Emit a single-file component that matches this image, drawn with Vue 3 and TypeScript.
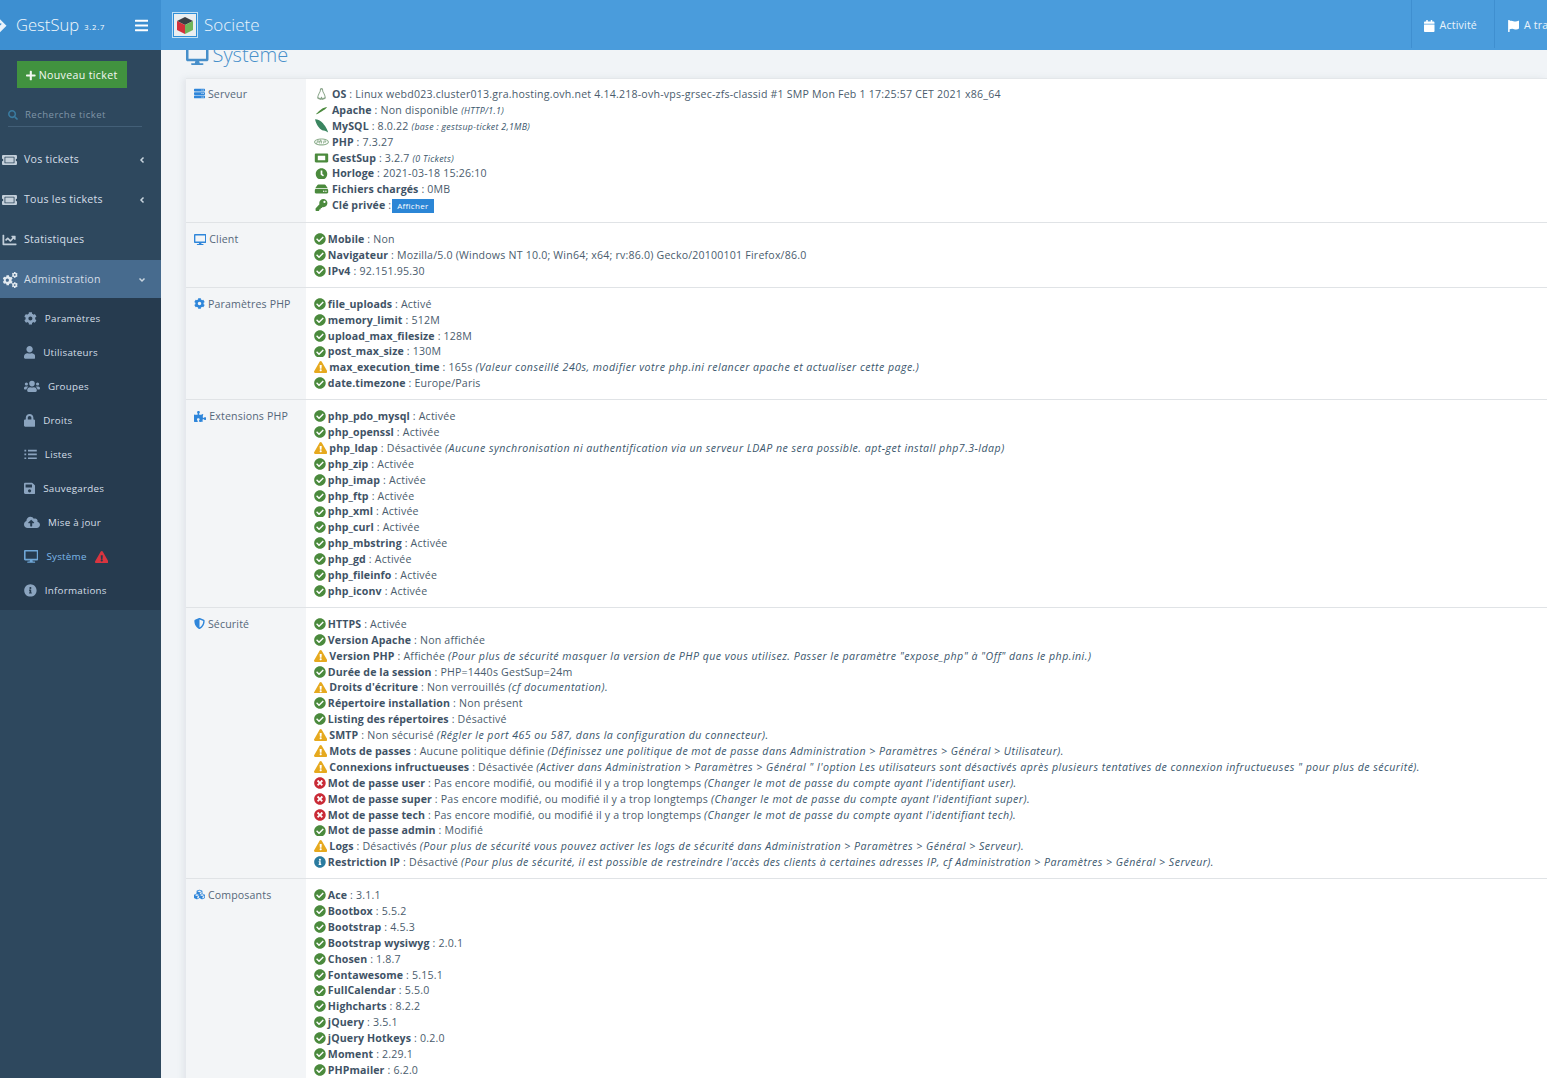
<template>
  <div class="page">
    <aside class="sidebar">
      <div class="brand">
        <svg class="brand-icon" viewBox="0 0 24 24"><path d="M1 12 11 2l11 11-10 10z" /><path class="cut" d="M7 12l5-5M10 15l5-5" /></svg>
        <span class="brand-name">GestSup</span>
        <span class="brand-version">3.2.7</span>
        <svg class="ic burger" :viewBox="icons.bars.vb"><path :d="icons.bars.d" /></svg>
      </div>
      <button type="button" class="new-ticket">
        <svg class="ic" :viewBox="icons.plus.vb"><path :d="icons.plus.d" /></svg>
        Nouveau ticket
      </button>
      <div class="search">
        <svg class="ic" :viewBox="icons.search.vb"><path :d="icons.search.d" /></svg>
        <span>Recherche ticket</span>
      </div>
      <nav class="menu">
        <a v-for="item in mainMenu" :key="item.label" class="menu-item" :class="{ active: item.label === 'Administration' }">
          <svg class="ic" :viewBox="icons[item.icon].vb"><path :d="icons[item.icon].d" /></svg>
          <span>{{ item.label }}</span>
          <svg v-if="item.caret" class="caret" viewBox="0 0 10 10"><path :d="item.caret === 'left' ? 'M6.5 2.500 4 5l2.500 2.500' : 'M2.500 3.500 5 6l2.500-2.500'" /></svg>
        </a>
      </nav>
      <div class="submenu">
        <a v-for="item in subMenu" :key="item.label" class="sub-item" :class="{ current: item.label === 'Système' }">
          <svg class="ic" :viewBox="icons[item.icon].vb"><path :d="icons[item.icon].d" /></svg>
          <span>{{ item.label }}</span>
          <svg v-if="item.label === 'Système'" class="ic alert" :viewBox="icons.warn.vb"><path :d="icons.warn.d" /></svg>
        </a>
      </div>
    </aside>

    <div class="main">
      <header class="topbar">
        <svg class="logo" viewBox="0 0 26 26">
          <rect x="0.5" y="0.5" width="25" height="25" fill="#2f8fd8" stroke="#bfe0f5" />
          <rect x="2" y="2" width="22" height="22" fill="#e9eef0" />
          <path d="M13 5l8 4-8 4-8-4z" fill="#3b3f44" />
          <path d="M5 9l8 4v9l-8-4z" fill="#d3303a" />
          <path d="M21 9l-8 4v9l8-4z" fill="#6fb55a" />
        </svg>
        <span class="company">Societe</span>
        <div class="top-nav">
          <a class="top-link">
            <svg class="ic" :viewBox="icons.calendar.vb"><path :d="icons.calendar.d" /></svg>
            Activité
          </a>
          <a class="top-link">
            <svg class="ic" :viewBox="icons.flag.vb"><path :d="icons.flag.d" /></svg>
            A traiter
          </a>
        </div>
      </header>

      <div class="content">
        <h1 class="page-title">
          <svg class="ic" :viewBox="icons.desktop.vb"><path :d="icons.desktop.d" /></svg>
          Système
        </h1>
        <div class="sys-table">
          <section v-for="section in sections" :key="section.title" class="sys-row">
            <div class="sys-head">
              <svg class="ic" :viewBox="icons[section.icon].vb"><path :d="icons[section.icon].d" /></svg>
              {{ section.title }}
            </div>
            <div class="sys-body" :class="{ server: section.title === 'Serveur' }">
              <div v-for="row in section.rows" :key="row.label" class="line">
                <svg class="ic" :class="row.icon" :viewBox="icons[row.icon].vb"><path :d="icons[row.icon].d" /></svg>
                {{ ' ' }}<b>{{ row.label }}</b> : {{ row.value }}
                <i v-if="row.note">{{ row.note }}</i>
                <span v-if="row.label === 'Clé privée'" class="badge">Afficher</span>
              </div>
            </div>
          </section>
        </div>
      </div>
    </div>
  </div>
</template>

<script setup lang="ts">
type Row = { icon: string; label: string; value: string; note?: string };
type Section = { title: string; icon: string; rows: Row[] };

const icons: Record<string, { vb: string; d: string }> = {
  ok: { vb: '0 0 512 512', d: 'M504 256c0 136.967-111.033 248-248 248S8 392.967 8 256 119.033 8 256 8s248 111.033 248 248zM227.314 387.314l184-184c6.248-6.248 6.248-16.379 0-22.627l-22.627-22.627c-6.248-6.249-16.379-6.249-22.628 0L216 308.118l-70.059-70.059c-6.248-6.248-16.379-6.248-22.628 0l-22.627 22.627c-6.248 6.248-6.248 16.379 0 22.627l104 104c6.249 6.249 16.379 6.249 22.628.001z' },
  warn: { vb: '0 0 576 512', d: 'M569.517 440.013C587.975 472.007 564.806 512 527.94 512H48.054c-36.937 0-59.999-40.055-41.577-71.987L246.423 23.985c18.467-32.009 64.72-31.951 83.154 0l239.94 416.028zM288 354c-25.405 0-46 20.595-46 46s20.595 46 46 46 46-20.595 46-46-20.595-46-46-46zm-43.673-165.346l7.418 136c.347 6.364 5.609 11.346 11.982 11.346h48.546c6.373 0 11.635-4.982 11.982-11.346l7.418-136c.375-6.874-5.098-12.654-11.982-12.654h-63.383c-6.884 0-12.356 5.78-11.981 12.654z' },
  err: { vb: '0 0 512 512', d: 'M256 8C119 8 8 119 8 256s111 248 248 248 248-111 248-248S393 8 256 8zm121.6 313.1c4.7 4.7 4.7 12.3 0 17L338 377.6c-4.7 4.7-12.3 4.7-17 0L256 312l-65.1 65.6c-4.7 4.7-12.3 4.7-17 0L134.4 338c-4.7-4.7-4.7-12.3 0-17l65.6-65-65.6-65.1c-4.7-4.7-4.7-12.3 0-17l39.6-39.6c4.7-4.7 12.3-4.7 17 0l65 65.7 65.1-65.6c4.7-4.7 12.3-4.7 17 0l39.6 39.6c4.7 4.7 4.7 12.3 0 17L312 256l65.6 65.1z' },
  info: { vb: '0 0 512 512', d: 'M256 8C119.043 8 8 119.083 8 256c0 136.997 111.043 248 248 248s248-111.003 248-248C504 119.083 392.957 8 256 8zm0 110c23.196 0 42 18.804 42 42s-18.804 42-42 42-42-18.804-42-42 18.804-42 42-42zm56 254c0 6.627-5.373 12-12 12h-88c-6.627 0-12-5.373-12-12v-24c0-6.627 5.373-12 12-12h12v-64h-12c-6.627 0-12-5.373-12-12v-24c0-6.627 5.373-12 12-12h64c6.627 0 12 5.373 12 12v100h12c6.627 0 12 5.373 12 12v24z' },
  desktop: { vb: '0 0 576 512', d: 'M528 0H48C21.5 0 0 21.5 0 48v320c0 26.5 21.5 48 48 48h192l-16 48h-72c-13.3 0-24 10.7-24 24s10.7 24 24 24h272c13.3 0 24-10.7 24-24s-10.7-24-24-24h-72l-16-48h192c26.5 0 48-21.5 48-48V48c0-26.5-21.5-48-48-48zm-16 352H64V64h448v288z' },
  bars: { vb: '0 0 448 512', d: 'M16 132h416c8.837 0 16-7.163 16-16V76c0-8.837-7.163-16-16-16H16C7.163 60 0 67.163 0 76v40c0 8.837 7.163 16 16 16zm0 160h416c8.837 0 16-7.163 16-16v-40c0-8.837-7.163-16-16-16H16c-8.837 0-16 7.163-16 16v40c0 8.837 7.163 16 16 16zm0 160h416c8.837 0 16-7.163 16-16v-40c0-8.837-7.163-16-16-16H16c-8.837 0-16 7.163-16 16v40c0 8.837 7.163 16 16 16z' },
  plus: { vb: '0 0 448 512', d: 'M416 208H272V64c0-17.67-14.33-32-32-32h-32c-17.67 0-32 14.33-32 32v144H32c-17.67 0-32 14.33-32 32v32c0 17.67 14.33 32 32 32h144v144c0 17.67 14.33 32 32 32h32c17.67 0 32-14.33 32-32V304h144c17.67 0 32-14.33 32-32v-32c0-17.67-14.33-32-32-32z' },
  search: { vb: '0 0 512 512', d: 'M505 442.7L405.3 343c-4.5-4.5-10.6-7-17-7H372c27.6-35.3 44-79.7 44-128C416 93.1 322.9 0 208 0S0 93.1 0 208s93.1 208 208 208c48.3 0 92.7-16.4 128-44v16.3c0 6.4 2.5 12.5 7 17l99.7 99.7c9.4 9.4 24.6 9.4 33.9 0l28.3-28.3c9.4-9.4 9.4-24.6.1-34zM208 336c-70.7 0-128-57.2-128-128 0-70.7 57.2-128 128-128 70.7 0 128 57.2 128 128 0 70.7-57.2 128-128 128z' },
  user: { vb: '0 0 448 512', d: 'M224 256c70.7 0 128-57.3 128-128S294.7 0 224 0 96 57.3 96 128s57.3 128 128 128zm89.6 32h-16.7c-22.2 10.2-46.9 16-72.9 16s-50.6-5.8-72.9-16h-16.7C60.2 288 0 348.2 0 422.4V464c0 26.5 21.5 48 48 48h352c26.5 0 48-21.5 48-48v-41.6c0-74.2-60.2-134.4-134.4-134.4z' },
  lock: { vb: '0 0 448 512', d: 'M400 224h-24v-72C376 68.2 307.8 0 224 0S72 68.2 72 152v72H48c-26.5 0-48 21.5-48 48v192c0 26.5 21.5 48 48 48h352c26.5 0 48-21.5 48-48V272c0-26.5-21.5-48-48-48zm-104 0H152v-72c0-39.7 32.3-72 72-72s72 32.3 72 72v72z' },
  save: { vb: '0 0 448 512', d: 'M433.941 129.941l-83.882-83.882A48 48 0 0 0 316.118 32H48C21.49 32 0 53.49 0 80v352c0 26.51 21.49 48 48 48h352c26.51 0 48-21.49 48-48V163.882a48 48 0 0 0-14.059-33.941zM224 416c-35.346 0-64-28.654-64-64 0-35.346 28.654-64 64-64s64 28.654 64 64c0 35.346-28.654 64-64 64zm96-304.52V212c0 6.627-5.373 12-12 12H76c-6.627 0-12-5.373-12-12V108c0-6.627 5.373-12 12-12h228.52c3.183 0 6.235 1.264 8.485 3.515l3.48 3.48A11.996 11.996 0 0 1 320 111.48z' },
  cog: { vb: '0 0 512 512', d: 'M487.4 315.7l-42.6-24.6c4.3-23.2 4.3-47 0-70.2l42.6-24.6c4.9-2.8 7.1-8.6 5.5-14-11.1-35.6-30-67.8-54.7-94.6-3.8-4.1-10-5.1-14.8-2.3L380.8 110c-17.9-15.4-38.5-27.3-60.8-35.1V25.8c0-5.6-3.9-10.5-9.4-11.7-36.7-8.2-74.3-7.8-109.2 0-5.5 1.2-9.4 6.1-9.4 11.7V75c-22.2 7.9-42.8 19.8-60.8 35.1L88.7 85.5c-4.9-2.8-11-1.9-14.8 2.3-24.7 26.7-43.6 58.9-54.7 94.6-1.7 5.4.6 11.2 5.5 14L67.3 221c-4.3 23.2-4.3 47 0 70.2l-42.6 24.6c-4.9 2.8-7.1 8.6-5.5 14 11.1 35.6 30 67.8 54.7 94.6 3.8 4.1 10 5.1 14.8 2.3l42.6-24.6c17.9 15.4 38.5 27.3 60.8 35.1v49.2c0 5.6 3.9 10.5 9.4 11.7 36.7 8.2 74.3 7.8 109.2 0 5.5-1.2 9.4-6.1 9.4-11.7v-49.2c22.2-7.9 42.8-19.8 60.8-35.1l42.6 24.6c4.9 2.8 11 1.9 14.8-2.3 24.7-26.7 43.6-58.9 54.7-94.6 1.5-5.5-.7-11.3-5.6-14.1zM256 336c-44.1 0-80-35.9-80-80s35.9-80 80-80 80 35.9 80 80-35.9 80-80 80z' },
  cogs: { vb: '18 0 430 440', d: 'M300 260l-24-14c2-13 2-26 0-39l24-14c3-2 4-5 3-8-6-20-17-38-31-53-2-2-6-3-8-1l-24 14c-10-9-21-15-34-20V98c0-3-2-6-5-7-20-4-42-4-61 0-3 1-5 4-5 7v27c-13 5-24 11-34 20l-24-14c-3-2-6-1-8 1-14 15-25 33-31 53-1 3 0 6 3 8l24 14c-2 13-2 26 0 39l-24 14c-3 2-4 5-3 8 6 20 17 38 31 53 2 2 5 3 8 1l24-14c10 9 21 15 34 20v27c0 3 2 6 5 7 20 4 42 4 61 0 3-1 5-4 5-7v-27c13-5 24-11 34-20l24 14c2 2 6 1 8-1 14-15 25-33 31-53 1-3 0-6-3-8zM160 270c-25 0-44-20-44-44s19-44 44-44 44 20 44 44-19 44-44 44zM440 100l-14-8c1-8 1-15 0-23l14-8c2-1 3-3 2-5-4-12-10-22-18-31-1-1-3-2-5-1l-14 8c-6-5-12-9-20-12V4c0-2-1-3-3-4-12-2-24-2-36 0-2 1-3 2-3 4v16c-8 3-14 7-20 12l-14-8c-2-1-4 0-5 1-8 9-14 19-18 31-1 2 0 4 2 5l14 8c-1 8-1 15 0 23l-14 8c-2 1-3 3-2 5 4 12 10 22 18 31 1 1 3 2 5 1l14-8c6 5 12 9 20 12v16c0 2 1 3 3 4 12 2 24 2 36 0 2-1 3-2 3-4v-16c8-3 14-7 20-12l14 8c2 1 4 0 5-1 8-9 14-19 18-31 1-2 0-4-2-5zM364 106c-14 0-26-12-26-26s12-26 26-26 26 12 26 26-12 26-26 26zM440 380l-14-8c1-8 1-15 0-23l14-8c2-1 3-3 2-5-4-12-10-22-18-31-1-1-3-2-5-1l-14 8c-6-5-12-9-20-12v-16c0-2-1-3-3-4-12-2-24-2-36 0-2 1-3 2-3 4v16c-8 3-14 7-20 12l-14-8c-2-1-4 0-5 1-8 9-14 19-18 31-1 2 0 4 2 5l14 8c-1 8-1 15 0 23l-14 8c-2 1-3 3-2 5 4 12 10 22 18 31 1 1 3 2 5 1l14-8c6 5 12 9 20 12v16c0 2 1 3 3 4 12 2 24 2 36 0 2-1 3-2 3-4v-16c8-3 14-7 20-12l14 8c2 1 4 0 5-1 8-9 14-19 18-31 1-2 0-4-2-5zM364 386c-14 0-26-12-26-26s12-26 26-26 26 12 26 26-12 26-26 26z' },
  ticket: { vb: '0 0 576 512', d: 'M128 160h320v192H128V160zm400 96c0 26.5 21.5 48 48 48v96c0 26.5-21.5 48-48 48H48c-26.5 0-48-21.5-48-48v-96c26.5 0 48-21.5 48-48s-21.5-48-48-48v-96c0-26.5 21.5-48 48-48h480c26.5 0 48 21.5 48 48v96c-26.5 0-48 21.5-48 48zm-48-104c0-13.3-10.7-24-24-24H120c-13.3 0-24 10.7-24 24v208c0 13.3 10.7 24 24 24h336c13.3 0 24-10.7 24-24V152z' },
  chart: { vb: '0 0 512 512', d: 'M496 384H64V80c0-8.84-7.16-16-16-16H16C7.16 64 0 71.16 0 80v336c0 17.67 14.33 32 32 32h464c8.84 0 16-7.16 16-16v-32c0-8.84-7.16-16-16-16zM464 96H345.94c-21.38 0-32.09 25.85-16.97 40.97l32.4 32.4L288 242.75l-73.37-73.37c-12.5-12.5-32.76-12.5-45.25 0l-68.69 68.69c-6.25 6.25-6.25 16.38 0 22.63l22.62 22.62c6.25 6.25 16.38 6.25 22.63 0L192 237.25l73.37 73.37c12.5 12.5 32.76 12.5 45.25 0l96-96 32.4 32.4c15.12 15.12 40.97 4.41 40.97-16.97V112c.01-8.84-7.15-16-15.99-16z' },
  users: { vb: '0 0 640 512', d: 'M96 224a64 64 0 1 0 0-128 64 64 0 0 0 0 128zm448 0a64 64 0 1 0 0-128 64 64 0 0 0 0 128zm32 32h-64c-17.600 0-33.500 7.100-45.100 18.600 40.300 22.100 68.900 62 75.100 109.400h66c17.700 0 32-14.300 32-32v-32c0-35.300-28.700-64-64-64zM320 256a112 112 0 1 0 0-224 112 112 0 0 0 0 224zm76.800 32h-8.300c-20.800 10-43.900 16-68.500 16s-47.600-6-68.500-16h-8.300C179.600 288 128 339.600 128 403.200V432c0 26.500 21.500 48 48 48h288c26.500 0 48-21.500 48-48v-28.800c0-63.600-51.600-115.200-115.200-115.200zM173.100 274.600C161.500 263.100 145.600 256 128 256H64c-35.300 0-64 28.700-64 64v32c0 17.700 14.300 32 32 32h65.900c6.300-47.400 34.900-87.300 75.200-109.400z' },
  list: { vb: '0 0 512 512', d: 'M16 72h72v64H16zM16 224h72v64H16zM16 376h72v64H16zM160 72h352v64H160zM160 224h352v64H160zM160 376h352v64H160z' },
  cloud: { vb: '0 0 640 512', d: 'M537.600 226.600c4.100-10.700 6.400-22.400 6.400-34.600 0-53-43-96-96-96-19.700 0-38.100 6-53.300 16.200C367 64.200 315.300 32 256 32c-88.400 0-160 71.600-160 160 0 2.700.1 5.400.2 8.100C40.200 219.800 0 273.200 0 336c0 79.500 64.500 144 144 144h368c70.700 0 128-57.300 128-128 0-61.900-44-113.600-102.400-125.400zM393.400 288H328v112c0 8.800-7.200 16-16 16h-48c-8.800 0-16-7.200-16-16V288h-65.400c-14.300 0-21.400-17.200-11.300-27.300l105.400-105.400c6.200-6.200 16.400-6.200 22.600 0l105.400 105.400c10.100 10.100 2.900 27.300-11.300 27.300z' },
  server: { vb: '0 0 512 512', d: 'M480 160H32c-17.700 0-32-14.300-32-32V64c0-17.700 14.300-32 32-32h448c17.700 0 32 14.300 32 32v64c0 17.700-14.300 32-32 32zm-48-88a24 24 0 1 0 0 48 24 24 0 0 0 0-48zm-64 0a24 24 0 1 0 0 48 24 24 0 0 0 0-48zm112 248H32c-17.700 0-32-14.300-32-32v-64c0-17.700 14.300-32 32-32h448c17.700 0 32 14.300 32 32v64c0 17.700-14.300 32-32 32zm-48-88a24 24 0 1 0 0 48 24 24 0 0 0 0-48zm-64 0a24 24 0 1 0 0 48 24 24 0 0 0 0-48zm112 248H32c-17.700 0-32-14.300-32-32v-64c0-17.700 14.300-32 32-32h448c17.700 0 32 14.300 32 32v64c0 17.700-14.300 32-32 32zm-48-88a24 24 0 1 0 0 48 24 24 0 0 0 0-48zm-64 0a24 24 0 1 0 0 48 24 24 0 0 0 0-48z' },
  puzzle: { vb: '0 0 576 512', d: 'M519.442 288.651c-41.519 0-59.5 31.593-82.058 31.593C377.409 320.244 432 144 432 144s-196.288 80-196.288-3.297c0-35.827 36.288-46.25 36.288-85.985C272 19.216 243.885 0 210.539 0c-34.654 0-66.366 18.891-66.366 56.346 0 41.364 31.711 59.277 31.711 81.75C175.885 207.719 0 166.758 0 166.758v333.237s178.635 41.047 178.635-28.662c0-22.473-40-40.107-40-81.471 0-37.456 29.25-56.346 63.577-56.346 33.673 0 61.788 19.216 61.788 54.717 0 39.735-36.288 50.158-36.288 85.985 0 60.803 129.675 25.73 181.23 25.73 0 0-34.725-120.101 25.827-120.101 35.962 0 46.423 36.152 86.308 36.152C556.712 416 576 387.99 576 354.443c0-34.199-18.962-65.792-56.558-65.792z' },
  shield: { vb: '0 0 512 512', d: 'M466.500 83.700l-192-80a48.150 48.150 0 0 0-36.900 0l-192 80C27.700 91.100 16 108.600 16 128c0 198.500 114.500 335.700 221.500 380.300 11.800 4.900 25.100 4.900 36.900 0C360.100 472.600 496 349.300 496 128c0-19.400-11.700-36.900-29.500-44.300zM256.100 446.300V65.700l176 73.400c-3.400 151.600-81.500 256.400-176 307.200z' },
  cubes: { vb: '0 0 512 512', d: 'M488.6 250.2L392 214V105.5c0-15-9.3-28.400-23.400-33.700l-100-37.500c-8.100-3.100-17.100-3.100-25.300 0l-100 37.500c-14.100 5.300-23.400 18.700-23.400 33.700V214l-96.600 36.200C9.300 255.500 0 268.900 0 283.900V394c0 13.600 7.700 26.100 19.900 32.200l100 50c10.100 5.100 22.100 5.100 32.200 0l103.900-52 103.900 52c10.100 5.100 22.100 5.100 32.200 0l100-50c12.200-6.100 19.900-18.600 19.900-32.200V283.900c0-15-9.300-28.400-23.400-33.700zM358 214.800l-85 31.900v-68.200l85-37v73.300zM154 104.100l102-38.200 102 38.200v.6l-102 41.400-102-41.400v-.6zm84 291.100l-85 42.500v-79.100l85-38.800v75.400zm0-112l-102 41.400-102-41.400v-.6l102-38.200 102 38.200v.6zm240 112l-85 42.500v-79.100l85-38.800v75.400zm0-112l-102 41.400-102-41.400v-.6l102-38.200 102 38.200v.6z' },
  linux: { vb: '0 0 448 512', d: 'M224 0c-50 0-70 40-70 90 0 60-24 90-56 150-28 54-60 140-60 190 0 20 20 30 40 40l90 40c20 8 40 2 56-14 16 16 36 22 56 14l90-40c20-10 40-20 40-40 0-50-32-136-60-190-32-60-56-90-56-150 0-50-20-90-70-90zm0 60c20 0 28 20 28 50 0 40 30 80 60 140 24 48 46 110 50 150l-90 40c-20-30-30-60-48-60s-28 30-48 60l-90-40c4-40 26-102 50-150 30-60 60-100 60-140 0-30 8-50 28-50z' },
  feather: { vb: '0 0 512 512', d: 'M500 130c-70 0-170 40-250 100S120 340 30 420c-10 14 6 28 18 18 100-50 150-90 230-130s170-100 222-178z' },
  leaf: { vb: '0 0 512 512', d: 'M20 10c100 0 210 50 280 140 60 80 140 150 200 340-80-50-160-80-220-80C180 370 60 200 20 10z' },
  php: { vb: '0 0 640 512', d: 'M320 104C146 104 0 172 0 256s146 152 320 152 320-68 320-152-146-152-320-152zm0 48c150 0 272 46 272 104s-122 104-272 104S48 314 48 256s122-104 272-104zM130 190l-36 130h36l10-38h40c40 0 60-24 60-56 0-24-18-36-44-36zm26 32h28c12 0 18 4 16 14-2 12-12 16-24 16h-28zm100-62l-36 160h36l18-72c2-10 10-14 20-14h16l-20 86h38l22-96c4-20-12-34-34-34h-28l10-30zm160 30l-36 130h36l10-38h40c40 0 60-24 60-56 0-24-18-36-44-36zm26 32h28c12 0 18 4 16 14-2 12-12 16-24 16h-28z' },
  box: { vb: '0 0 576 512', d: 'M528 64H48C21 64 0 85 0 112v288c0 27 21 48 48 48h480c27 0 48-21 48-48V112c0-27-21-48-48-48zM128 160h320v192H128z' },
  clock: { vb: '0 0 512 512', d: 'M256 8C119 8 8 119 8 256s111 248 248 248 248-111 248-248S393 8 256 8zm57.100 350.100L224.900 294c-3.100-2.300-4.900-5.900-4.900-9.700V116c0-6.600 5.400-12 12-12h48c6.600 0 12 5.400 12 12v137.700l63.500 46.200c5.400 3.900 6.500 11.400 2.600 16.800l-28.200 38.800c-3.900 5.300-11.400 6.500-16.800 2.600z' },
  hdd: { vb: '0 0 576 512', d: 'M576 304v96c0 26.510-21.490 48-48 48H48c-26.510 0-48-21.490-48-48v-96c0-26.510 21.490-48 48-48h480c26.510 0 48 21.490 48 48zm-48-80a79.557 79.557 0 0 1 30.777 6.165L462.590 85.980A48.003 48.003 0 0 0 422.650 64H153.350a48 48 0 0 0-39.940 21.980L17.223 230.165A79.557 79.557 0 0 1 48 224h480zm-48 96c-17.673 0-32 14.327-32 32s14.327 32 32 32 32-14.327 32-32-14.327-32-32-32zm-96 0c-17.673 0-32 14.327-32 32s14.327 32 32 32 32-14.327 32-32-14.327-32-32-32z' },
  key: { vb: '0 0 512 512', d: 'M512 176c0 97-79 176-176 176-11 0-22-1-33-3l-24 27c-5 5-11 8-18 8h-37v40c0 13-11 24-24 24h-40v40c0 13-11 24-24 24H24c-13 0-24-11-24-24v-78c0-6 3-12 7-17l162-162c-6-18-9-36-9-55C160 79 239 0 336 0s176 79 176 176zm-176-48a48 48 0 1 0 96 0 48 48 0 0 0-96 0z' },
  calendar: { vb: '0 0 448 512', d: 'M12 192h424c6.600 0 12 5.400 12 12v260c0 26.500-21.500 48-48 48H48c-26.500 0-48-21.500-48-48V204c0-6.600 5.400-12 12-12zm436-44v-36c0-26.500-21.500-48-48-48h-48V12c0-6.600-5.400-12-12-12h-40c-6.600 0-12 5.400-12 12v52H160V12c0-6.600-5.400-12-12-12h-40c-6.600 0-12 5.400-12 12v52H48C21.500 64 0 85.500 0 112v36c0 6.600 5.400 12 12 12h424c6.600 0 12-5.400 12-12z' },
  flag: { vb: '0 0 512 512', d: 'M349.600 64c-53.500 0-97.900-34.700-165.500-34.700-25 0-47.400 4.400-68.200 12C120 30 120 20 119 10 117 -5 90-5 72 0 50 5 40 25 48 50v438c0 13.300 10.700 24 24 24h16c13.300 0 24-10.700 24-24v-94.400c28.300-12.100 63.600-22.100 114.400-22.100 53.600 0 97.800 34.800 165.500 34.800 48.400 0 87-16.400 123-41 8.700-6 14.100-15.700 14.100-26.400V64.900c0-23.400-24.300-38.900-45.500-29-34.300 16-76.400 28.100-111.900 28.100z' },
};

const mainMenu = [
  { label: 'Vos tickets', icon: 'ticket', caret: 'left' },
  { label: 'Tous les tickets', icon: 'ticket', caret: 'left' },
  { label: 'Statistiques', icon: 'chart', caret: '' },
  { label: 'Administration', icon: 'cogs', caret: 'down' },
];

const subMenu = [
  { label: 'Paramètres', icon: 'cog' },
  { label: 'Utilisateurs', icon: 'user' },
  { label: 'Groupes', icon: 'users' },
  { label: 'Droits', icon: 'lock' },
  { label: 'Listes', icon: 'list' },
  { label: 'Sauvegardes', icon: 'save' },
  { label: 'Mise à jour', icon: 'cloud' },
  { label: 'Système', icon: 'desktop' },
  { label: 'Informations', icon: 'info' },
];

const r = (icon: string, label: string, value: string, note?: string): Row => ({ icon, label, value, note });

const sections: Section[] = [
  {
    title: 'Serveur',
    icon: 'server',
    rows: [
      r('linux', 'OS', 'Linux webd023.cluster013.gra.hosting.ovh.net 4.14.218-ovh-vps-grsec-zfs-classid #1 SMP Mon Feb 1 17:25:57 CET 2021 x86_64'),
      r('feather', 'Apache', 'Non disponible', '(HTTP/1.1)'),
      r('leaf', 'MySQL', '8.0.22', '(base : gestsup-ticket 2,1MB)'),
      r('php', 'PHP', '7.3.27'),
      r('box', 'GestSup', '3.2.7', '(0 Tickets)'),
      r('clock', 'Horloge', '2021-03-18 15:26:10'),
      r('hdd', 'Fichiers chargés', '0MB'),
      r('key', 'Clé privée', ''),
    ],
  },
  {
    title: 'Client',
    icon: 'desktop',
    rows: [
      r('ok', 'Mobile', 'Non'),
      r('ok', 'Navigateur', 'Mozilla/5.0 (Windows NT 10.0; Win64; x64; rv:86.0) Gecko/20100101 Firefox/86.0'),
      r('ok', 'IPv4', '92.151.95.30'),
    ],
  },
  {
    title: 'Paramètres PHP',
    icon: 'cog',
    rows: [
      r('ok', 'file_uploads', 'Activé'),
      r('ok', 'memory_limit', '512M'),
      r('ok', 'upload_max_filesize', '128M'),
      r('ok', 'post_max_size', '130M'),
      r('warn', 'max_execution_time', '165s', '(Valeur conseillé 240s, modifier votre php.ini relancer apache et actualiser cette page.)'),
      r('ok', 'date.timezone', 'Europe/Paris'),
    ],
  },
  {
    title: 'Extensions PHP',
    icon: 'puzzle',
    rows: [
      r('ok', 'php_pdo_mysql', 'Activée'),
      r('ok', 'php_openssl', 'Activée'),
      r('warn', 'php_ldap', 'Désactivée', '(Aucune synchronisation ni authentification via un serveur LDAP ne sera possible. apt-get install php7.3-ldap)'),
      r('ok', 'php_zip', 'Activée'),
      r('ok', 'php_imap', 'Activée'),
      r('ok', 'php_ftp', 'Activée'),
      r('ok', 'php_xml', 'Activée'),
      r('ok', 'php_curl', 'Activée'),
      r('ok', 'php_mbstring', 'Activée'),
      r('ok', 'php_gd', 'Activée'),
      r('ok', 'php_fileinfo', 'Activée'),
      r('ok', 'php_iconv', 'Activée'),
    ],
  },
  {
    title: 'Sécurité',
    icon: 'shield',
    rows: [
      r('ok', 'HTTPS', 'Activée'),
      r('ok', 'Version Apache', 'Non affichée'),
      r('warn', 'Version PHP', 'Affichée', '(Pour plus de sécurité masquer la version de PHP que vous utilisez. Passer le paramètre "expose_php" à "Off" dans le php.ini.)'),
      r('ok', 'Durée de la session', 'PHP=1440s GestSup=24m'),
      r('warn', "Droits d'écriture", 'Non verrouillés', '(cf documentation).'),
      r('ok', 'Répertoire installation', 'Non présent'),
      r('ok', 'Listing des répertoires', 'Désactivé'),
      r('warn', 'SMTP', 'Non sécurisé', '(Régler le port 465 ou 587, dans la configuration du connecteur).'),
      r('warn', 'Mots de passes', 'Aucune politique définie', '(Définissez une politique de mot de passe dans Administration > Paramètres > Général > Utilisateur).'),
      r('warn', 'Connexions infructueuses', 'Désactivée', '(Activer dans Administration > Paramètres > Général " l\'option Les utilisateurs sont désactivés après plusieurs tentatives de connexion infructueuses " pour plus de sécurité).'),
      r('err', 'Mot de passe user', 'Pas encore modifié, ou modifié il y a trop longtemps', "(Changer le mot de passe du compte ayant l'identifiant user)."),
      r('err', 'Mot de passe super', 'Pas encore modifié, ou modifié il y a trop longtemps', "(Changer le mot de passe du compte ayant l'identifiant super)."),
      r('err', 'Mot de passe tech', 'Pas encore modifié, ou modifié il y a trop longtemps', "(Changer le mot de passe du compte ayant l'identifiant tech)."),
      r('ok', 'Mot de passe admin', 'Modifié'),
      r('warn', 'Logs', 'Désactivés', '(Pour plus de sécurité vous pouvez activer les logs de sécurité dans Administration > Paramètres > Général > Serveur).'),
      r('info', 'Restriction IP', 'Désactivé', "(Pour plus de sécurité, il est possible de restreindre l'accès des clients à certaines adresses IP, cf Administration > Paramètres > Général > Serveur)."),
    ],
  },
  {
    title: 'Composants',
    icon: 'cubes',
    rows: [
      r('ok', 'Ace', '3.1.1'),
      r('ok', 'Bootbox', '5.5.2'),
      r('ok', 'Bootstrap', '4.5.3'),
      r('ok', 'Bootstrap wysiwyg', '2.0.1'),
      r('ok', 'Chosen', '1.8.7'),
      r('ok', 'Fontawesome', '5.15.1'),
      r('ok', 'FullCalendar', '5.5.0'),
      r('ok', 'Highcharts', '8.2.2'),
      r('ok', 'jQuery', '3.5.1'),
      r('ok', 'jQuery Hotkeys', '0.2.0'),
      r('ok', 'Moment', '2.29.1'),
      r('ok', 'PHPmailer', '6.2.0'),
    ],
  },
];
</script>

<style>
html,
body {
  margin: 0;
  height: 100%;
  overflow: hidden;
}
</style>

<style scoped>
.page {
  display: flex;
  height: 1078px;
  overflow: hidden;
  font-family: "Open Sans", "Liberation Sans", sans-serif;
  font-size: 10.6px;
  line-height: 15.9px;
  color: #4a5c6d;
}

.ic {
  height: 1em;
  fill: currentColor;
  vertical-align: -0.125em;
}

.sidebar {
  width: 161px;
  flex: none;
  background: #2e485e;
  color: #d5dfe8;
  letter-spacing: 0.25px;
}

.brand {
  height: 50px;
  background: #3d8fd1;
  display: flex;
  align-items: center;
  color: #fff;
}

.brand-icon {
  width: 18px;
  height: 18px;
  margin-left: -10px;
  margin-right: 8px;
  fill: #eaf3fb;
}

.brand-icon .cut {
  fill: none;
  stroke: #3d8fd1;
  stroke-width: 1.5;
}

.brand-name {
  font-size: 16.6px;
  letter-spacing: 0;
  font-weight: 300;
  color: #f2f8fc;
}

.brand-version {
  font-size: 7.6px;
  margin-left: 5px;
  margin-top: 5px;
  letter-spacing: 0.8px;
}

.burger {
  font-size: 15px;
  margin-left: auto;
  margin-right: 13px;
}

.new-ticket {
  display: flex;
  align-items: center;
  gap: 3px;
  width: 110px;
  height: 27px;
  margin: 11px 0 0 17px;
  padding: 2px 0 0 9px;
  border: 0;
  background: #41923f;
  color: #f3f8f2;
  font: inherit;
  letter-spacing: 0.35px;
}

.new-ticket .ic {
  font-size: 11px;
  vertical-align: 0;
}

.search {
  display: flex;
  align-items: center;
  gap: 7px;
  width: 134px;
  height: 23px;
  margin: 14px 0 0 8px;
  padding-top: 1px;
  box-sizing: content-box;
  border-bottom: 1px solid #435f77;
  color: #7e94a6;
  font-size: 9.6px;
  letter-spacing: 0.45px;
}

.search .ic {
  color: #3a7ba0;
  font-size: 10px;
}

.menu {
  margin-top: 13px;
}

.menu-item {
  display: flex;
  align-items: center;
  height: 40px;
  padding-left: 2px;
  box-sizing: border-box;
}

.menu-item .ic {
  width: 15px;
  flex: none;
  height: 14px;
  margin-right: 7px;
  color: #c3cfda;
}

.menu-item.active {
  background: #476b8e;
  height: 38px;
  padding-top: 1px;
}

.menu-item.active .ic {
  width: 16px;
  height: 16px;
  margin-right: 6px;
  color: #e3eaf0;
}

.caret {
  width: 10px;
  height: 10px;
  margin-left: auto;
  margin-right: 14px;
  fill: none;
  stroke: #c9d5df;
  stroke-width: 1.5;
}

.submenu {
  background: #263b4f;
  padding: 3px 0 3px;
  font-size: 9.8px;
}

.sub-item {
  display: flex;
  align-items: center;
  height: 34px;
  padding-left: 24px;
  padding-top: 1px;
  box-sizing: border-box;
}

.sub-item .ic {
  font-size: 12.8px;
  margin-right: 8px;
  color: #8ba4bf;
}

.sub-item.current {
  color: #7db8ea;
}

.sub-item.current .ic {
  color: #6fa6d6;
}

.sub-item .ic.alert {
  font-size: 12px;
  color: #d9353f;
  margin-left: 8px;
}

.main {
  flex: 1;
  min-width: 0;
  display: flex;
  flex-direction: column;
  background: #f1f4f7;
}

.topbar {
  height: 50px;
  flex: none;
  display: flex;
  align-items: center;
  background: #4a9cdc;
  color: #eaf4fb;
  position: relative;
  z-index: 2;
}

.logo {
  width: 26px;
  height: 26px;
  margin-left: 11px;
}

.company {
  margin-left: 6px;
  font-size: 17px;
  font-weight: 300;
}

.top-nav {
  display: flex;
  height: 50px;
  margin-left: auto;
  margin-right: -30px;
  font-size: 10.6px;
  letter-spacing: 0.2px;
}

.top-link {
  display: flex;
  align-items: center;
  gap: 5px;
  width: 83px;
  height: 48px;
  box-sizing: border-box;
  padding: 4px 0 0 12px;
  border-left: 1px solid #3f8fd0;
  white-space: nowrap;
}

.top-link .ic {
  font-size: 12px;
  color: #fff;
}

.content {
  flex: 1;
  min-height: 0;
  padding-left: 25px;
  overflow: hidden;
}

.page-title {
  display: flex;
  align-items: center;
  gap: 4px;
  height: 35px;
  margin: -7px 0 0;
  padding-bottom: 11px;
  box-sizing: border-box;
  font-size: 20px;
  line-height: 24px;
  font-weight: 300;
  color: #478fca;
}

.sys-table {
  background: #fff;
  border-top: 1px solid #e4e7ea;
  box-shadow: -3px 0 6px rgba(120, 135, 150, 0.12);
}

.sys-row {
  display: flex;
  border-bottom: 1px solid #e0e3e6;
}

.sys-head {
  width: 120px;
  flex: none;
  box-sizing: border-box;
  padding: 9px 0 7px 8px;
  background: #f3f5f7;
  color: #55677a;
  letter-spacing: 0.15px;
}

.sys-row:first-child .sys-head {
  padding-top: 8px;
}

.sys-head .ic {
  font-size: 11px;
  color: #2f86da;
}

.sys-body {
  flex: 1;
  padding: 9px 0 7px 8px;
  white-space: nowrap;
  letter-spacing: 0.2px;
}

.sys-body.server {
  padding: 8px 0 8px 8px;
}

.line {
  height: 15.9px;
}

.line .ic {
  font-size: 11.9px;
  color: #4b8a3d;
  vertical-align: -2px;
  margin-right: -1px;
}

.line .ic.warn {
  color: #e6a91e;
}

.line .ic.err {
  color: #c92b36;
}

.line .ic.info {
  color: #2a7b9f;
}

.server .ic {
  width: 15px;
  margin-right: 0;
}

.server .ic.linux {
  color: #8aa58a;
}

.server .ic.php {
  color: #8fb08f;
}

.line .ic.leaf {
  height: 14px;
  vertical-align: -3px;
  color: #3a8560;
}

.line b {
  color: #3f5366;
  font-weight: 700;
  letter-spacing: 0.1px;
}

.line i {
  color: #3a566c;
  letter-spacing: 0.47px;
}

.server i {
  font-size: 8.8px;
  letter-spacing: 0.3px;
}

.badge {
  display: inline-block;
  padding: 0 5px;
  margin-left: -2px;
  background: #2b86d6;
  color: #fff;
  font-size: 8px;
  line-height: 14px;
  vertical-align: 0;
  letter-spacing: 0.3px;
}
</style>
